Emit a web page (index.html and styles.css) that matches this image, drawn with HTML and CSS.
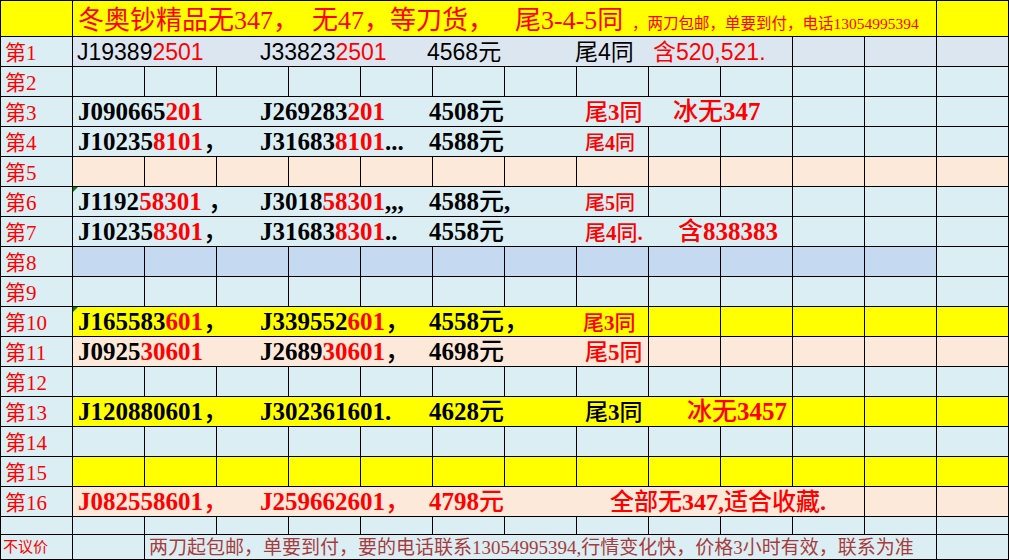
FILE: index.html
```html
<!DOCTYPE html>
<html lang="zh">
<head>
<meta charset="utf-8">
<title>冬奥钞</title>
<link rel="stylesheet" href="styles.css">
</head>
<body>
<div class="sheet">
  <!-- title row -->
  <div class="c y"></div>
  <div class="c y s12 title">
    <span class="tA">冬奥钞精品无347，</span><span class="tB">无47，等刀货，</span><span class="tC">尾3-4-5同</span><span class="tD">，两刀包邮，单要到付，电话13054995394</span>
  </div>
  <div class="c y"></div>

  <!-- 1 -->
  <div class="c lb lab">第1</div>
  <div class="c gb s10 txt sans">
    <div class="ln ln-sans">
      <span>J19389<em>2501</em></span>
      <span>J33823<em>2501</em></span>
      <span>4568元</span>
      <span>尾4同</span>
      <span class="r">含520,521.</span>
    </div>
  </div>
  <div class="c gb"></div><div class="c gb"></div><div class="c gb"></div>

  <!-- 2 -->
  <div class="c lb lab">第2</div>
  <div class="c lb"></div><div class="c lb"></div><div class="c lb"></div><div class="c lb"></div><div class="c lb"></div><div class="c lb"></div><div class="c lb"></div><div class="c lb"></div><div class="c lb"></div><div class="c lb"></div><div class="c lb"></div><div class="c lb"></div><div class="c lb"></div>

  <!-- 3 -->
  <div class="c lb lab">第3</div>
  <div class="c lb s10 txt serif">
    <div class="ln">
      <span>J090665<em>201</em></span>
      <span>J269283<em>201</em></span>
      <span>4508<span class="k">元</span></span>
      <span class="r t23"><span class="k">尾</span>3<span class="k">同</span></span>
      <span class="r"><span class="k">冰无</span>347</span>
    </div>
  </div>
  <div class="c lb"></div><div class="c lb"></div><div class="c lb"></div>

  <!-- 4 -->
  <div class="c lb lab">第4</div>
  <div class="c lb s8 txt serif">
    <div class="ln">
      <span>J10235<em>8101</em><span class="k">，</span></span>
      <span>J31683<em>8101</em>...</span>
      <span>4588<span class="k">元</span></span>
      <span class="r t20"><span class="k">尾</span>4<span class="k">同</span></span>
    </div>
  </div>
  <div class="c lb"></div><div class="c lb"></div><div class="c lb"></div><div class="c lb"></div><div class="c lb"></div>

  <!-- 5 -->
  <div class="c lb lab">第5</div>
  <div class="c pk"></div><div class="c pk"></div><div class="c pk"></div><div class="c pk"></div><div class="c pk"></div><div class="c pk"></div><div class="c pk"></div><div class="c pk"></div><div class="c pk"></div><div class="c pk"></div><div class="c pk"></div><div class="c pk"></div><div class="c pk"></div>

  <!-- 6 -->
  <div class="c lb lab">第6</div>
  <div class="c lb s8 txt serif mark">
    <div class="ln">
      <span>J1192<em>58301</em> <span class="k">，</span></span>
      <span>J3018<em>58301</em>,,,</span>
      <span>4588<span class="k">元</span>,</span>
      <span class="r t20"><span class="k">尾</span>5<span class="k">同</span></span>
    </div>
  </div>
  <div class="c lb"></div><div class="c lb"></div><div class="c lb"></div><div class="c lb"></div><div class="c lb"></div>

  <!-- 7 -->
  <div class="c lb lab">第7</div>
  <div class="c lb s10 txt serif">
    <div class="ln">
      <span>J10235<em>8301</em><span class="k">，</span></span>
      <span>J31683<em>8301</em>..</span>
      <span>4558<span class="k">元</span></span>
      <span class="r t21"><span class="k">尾</span>4<span class="k">同</span>.</span>
      <span class="r n7"><span class="k">含</span>838383</span>
    </div>
  </div>
  <div class="c lb"></div><div class="c lb"></div><div class="c lb"></div>

  <!-- 8 -->
  <div class="c lb lab">第8</div>
  <div class="c bb"></div><div class="c bb"></div><div class="c bb"></div><div class="c bb"></div><div class="c bb"></div><div class="c bb"></div><div class="c bb"></div><div class="c bb"></div><div class="c bb"></div><div class="c bb"></div><div class="c bb"></div><div class="c bb"></div><div class="c lb"></div>

  <!-- 9 -->
  <div class="c lb lab">第9</div>
  <div class="c lb"></div><div class="c lb"></div><div class="c lb"></div><div class="c lb"></div><div class="c lb"></div><div class="c lb"></div><div class="c lb"></div><div class="c lb"></div><div class="c lb"></div><div class="c lb"></div><div class="c lb"></div><div class="c lb"></div><div class="c lb"></div>

  <!-- 10 -->
  <div class="c lb lab">第10</div>
  <div class="c y s8 txt serif mark">
    <div class="ln">
      <span>J165583<em>601</em><span class="k">，</span></span>
      <span>J339552<em>601</em><span class="k">，</span></span>
      <span>4558<span class="k">元，</span></span>
      <span class="r t21 tl"><span class="k">尾</span>3<span class="k">同</span></span>
    </div>
  </div>
  <div class="c y"></div><div class="c y"></div><div class="c y"></div><div class="c y"></div><div class="c y"></div>

  <!-- 11 -->
  <div class="c lb lab">第11</div>
  <div class="c pk s8 txt serif">
    <div class="ln">
      <span>J0925<em>30601</em></span>
      <span>J2689<em>30601</em><span class="k">，</span></span>
      <span>4698<span class="k">元</span></span>
      <span class="r t23"><span class="k">尾</span>5<span class="k">同</span></span>
    </div>
  </div>
  <div class="c pk"></div><div class="c pk"></div><div class="c pk"></div><div class="c pk"></div><div class="c pk"></div>

  <!-- 12 -->
  <div class="c lb lab">第12</div>
  <div class="c lb"></div><div class="c lb"></div><div class="c lb"></div><div class="c lb"></div><div class="c lb"></div><div class="c lb"></div><div class="c lb"></div><div class="c lb"></div><div class="c lb"></div><div class="c lb"></div><div class="c lb"></div><div class="c lb"></div><div class="c lb"></div>

  <!-- 13 -->
  <div class="c lb lab">第13</div>
  <div class="c y s10 txt serif">
    <div class="ln">
      <span>J120880601<span class="k">，</span></span>
      <span>J302361601.</span>
      <span>4628<span class="k">元</span></span>
      <span class="t23"><span class="k">尾</span>3<span class="k">同</span></span>
      <span class="r n13"><span class="k">冰无</span>3457</span>
    </div>
  </div>
  <div class="c y"></div><div class="c y"></div><div class="c y"></div>

  <!-- 14 -->
  <div class="c lb lab">第14</div>
  <div class="c lb"></div><div class="c lb"></div><div class="c lb"></div><div class="c lb"></div><div class="c lb"></div><div class="c lb"></div><div class="c lb"></div><div class="c lb"></div><div class="c lb"></div><div class="c lb"></div><div class="c lb"></div><div class="c lb"></div><div class="c lb"></div>

  <!-- 15 -->
  <div class="c lb lab">第15</div>
  <div class="c y"></div><div class="c y"></div><div class="c y"></div><div class="c y"></div><div class="c y"></div><div class="c y"></div><div class="c y"></div><div class="c y"></div><div class="c y"></div><div class="c y"></div><div class="c y"></div><div class="c y"></div><div class="c y"></div>

  <!-- 16 -->
  <div class="c lb lab">第16</div>
  <div class="c pk s11 txt serif r">
    <div class="ln">
      <span>J082558601<span class="k">，</span></span>
      <span>J259662601<span class="k">，</span></span>
      <span>4798<span class="k">元</span></span>
      <span class="wide"><span class="k">全部无</span>347,<span class="k">适合收藏</span>.</span>
    </div>
  </div>
  <div class="c pk"></div><div class="c pk"></div>

  <!-- blank -->
  <div class="c lb"></div>
  <div class="c lb"></div><div class="c lb"></div><div class="c lb"></div><div class="c lb"></div><div class="c lb"></div><div class="c lb"></div><div class="c lb"></div><div class="c lb"></div><div class="c lb"></div><div class="c lb"></div><div class="c lb"></div><div class="c lb"></div><div class="c lb"></div>

  <!-- footer -->
  <div class="c lb foot-lab">不议价</div>
  <div class="c lb"></div>
  <div class="c lb s11 foot">两刀起包邮，单要到付，要的电话联系13054995394,行情变化快，价格3小时有效，联系为准</div>
  <div class="c lb"></div>
</div>
</body>
</html>
```

FILE: styles.css
```css
html, body {
  margin: 0;
  padding: 0;
  background: #ffffff;
}

.sheet {
  display: grid;
  grid-template-columns: repeat(14, 71px);
  grid-template-rows: 35px repeat(16, 29px) 17px 24px;
  gap: 1px;
  padding: 1px;
  background: #000000;
  width: max-content;
}

.c {
  min-width: 0;
  position: relative;
}

.y  { background: #ffff00; }
.lb { background: #daeef3; }
.gb { background: #dce6f1; }
.bb { background: #c5d9f1; }
.pk { background: #fde9d9; }

.s8  { grid-column: span 8; }
.s10 { grid-column: span 10; }
.s11 { grid-column: span 11; }
.s12 { grid-column: span 12; }

.r { color: #ff0000; }
em { font-style: normal; color: #ff0000; }

/* row labels */
.lab {
  display: flex;
  align-items: flex-end;
  padding-left: 4px;
  padding-bottom: 2px;
  box-sizing: border-box;
  color: #ff0000;
  font-family: "Liberation Serif", "Noto Sans CJK SC", serif;
  font-size: 21px;
  line-height: 1;
}

/* title */
.title {
  display: flex;
  align-items: baseline;
  padding-left: 5px;
  padding-top: 7px;
  box-sizing: border-box;
  white-space: nowrap;
  color: #ff0000;
  font-family: "Liberation Serif", "Noto Sans CJK SC", serif;
  font-size: 26px;
  line-height: 1;
}
.tA { width: 234px; }
.tB { width: 203px; }
.tC { width: 117px; }
.tD { font-size: 15.5px; }

/* text rows */
.txt {
  display: flex;
  align-items: flex-end;
  padding-bottom: 2px;
  box-sizing: border-box;
  white-space: nowrap;
  line-height: 1;
}
.serif {
  font-family: "Liberation Serif", "Noto Sans CJK SC", serif;
  font-weight: 700;
  font-size: 25px;
}
.sans {
  font-family: "Liberation Sans", "Noto Sans CJK SC", sans-serif;
  font-size: 23px;
}
.k { font-weight: 500; }

.ln {
  display: grid;
  grid-template-columns: 182px 169px 156px 88px auto;
  align-items: baseline;
  padding-left: 5px;
}
.ln-sans {
  grid-template-columns: 183px 167px 148px 78px auto;
  padding-left: 4px;
}

.t20 { font-size: 20px; }
.t21 { font-size: 21px; }
.t23 { font-size: 23px; }
.tl  { margin-left: -2px; }
.n7  { margin-left: 5px; }
.n13 { margin-left: 14px; }
.wide {
  grid-column: span 2;
  margin-left: 25px;
  font-size: 24px;
}

/* Excel error marker */
.mark::before {
  content: "";
  position: absolute;
  left: 0;
  top: 0;
  border-top: 5px solid #008000;
  border-right: 5px solid transparent;
}

/* footer */
.foot-lab {
  display: flex;
  align-items: center;
  padding-left: 2px;
  color: #ff0000;
  font-family: "Liberation Serif", "Noto Sans CJK SC", serif;
  font-size: 15px;
  line-height: 1;
}
.foot {
  display: flex;
  align-items: center;
  padding-left: 4px;
  white-space: nowrap;
  color: #a83c3c;
  font-family: "Liberation Serif", "Noto Sans CJK SC", serif;
  font-size: 19px;
  line-height: 1;
}
```
